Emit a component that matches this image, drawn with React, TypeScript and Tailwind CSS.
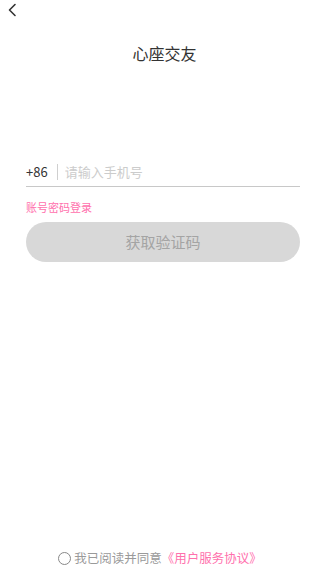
export default function App() {
  return (
    <div
      className="flex h-[568px] w-[320px] flex-col bg-white"
      style={{ fontFamily: '"Noto Sans CJK SC", "Noto Sans", sans-serif' }}
    >
      {/* top bar */}
      <div className="flex h-[17px] items-end pl-[7px]">
        <svg width="10" height="14" viewBox="0 0 10 14" fill="none">
          <path d="M8 1.5 L2.5 7 L8 12.5" stroke="#333" strokeWidth="1.6" strokeLinecap="round" strokeLinejoin="round" />
        </svg>
      </div>

      <h1 className="mt-[26px] pl-[9px] text-center text-[16px] leading-[20px] text-[#333]">心座交友</h1>

      <div className="mt-[96px] pl-[26px] pr-[20px]">
        <div className="flex h-[28px] items-center border-b border-[#c8c8c8] pb-[2px]">
          <span className="text-[13px] text-[#333]">+86</span>
          <span className="ml-[9px] mr-[7px] h-[16px] w-px bg-[#cfcfcf]" />
          <input
            className="min-w-0 flex-1 bg-transparent text-[13px] text-[#333] outline-none placeholder:text-[#cccccc]"
            placeholder="请输入手机号"
          />
        </div>

        <div className="mt-[12px] text-[11px] leading-[16px] text-[#ff70ad]">账号密码登录</div>

        <button className="mt-[7px] flex h-[40px] w-full items-center justify-center rounded-full bg-[#d8d8d8] text-[15px] text-[#a4a4a4]">
          获取验证码
        </button>
      </div>

      <div className="flex-1" />

      <div className="flex h-[20px] items-center justify-center text-[12.5px]">
        <span className="mr-[3px] h-[13px] w-[13px] rounded-full border-[1.5px] border-[#888]" />
        <span className="text-[#9a9a9a]">我已阅读并同意</span>
        <span className="text-[#ff70ad]">《用户服务协议》</span>
      </div>
    </div>
  )
}
